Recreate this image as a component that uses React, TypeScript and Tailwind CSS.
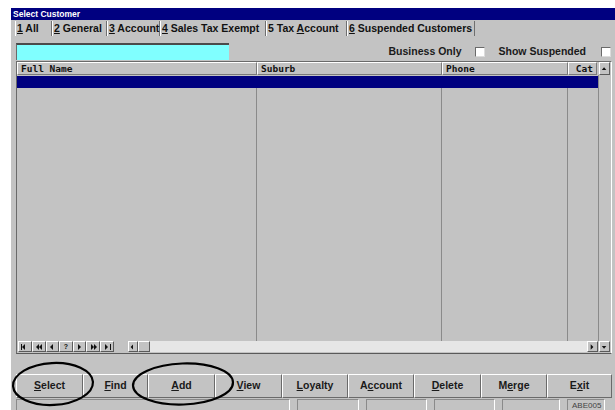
import React from "react";

const ui = { fontFamily: '"Liberation Sans", Arial, sans-serif' };
const mono = { fontFamily: '"DejaVu Sans Mono", "Liberation Mono", monospace' };

function Tab({ w, children }: { w: number; children: React.ReactNode }) {
  return (
    <div
      className="h-full flex items-center pl-[2px] shrink-0 border-r border-r-[#6f6f6f]"
      style={{ width: w, boxShadow: "inset 1px 0 0 #ffffff" }}
    >
      <span className="text-[10.5px] font-bold text-[#111] whitespace-nowrap">{children}</span>
    </div>
  );
}

function HeadCell({ w, children }: { w: number; children?: React.ReactNode }) {
  return (
    <div
      className="h-full shrink-0 flex items-center pl-[3px] border-t border-l border-t-white border-l-white border-r border-b border-r-[#7a7a7a] border-b-[#7a7a7a]"
      style={{ width: w }}
    >
      <span className="text-[9.5px] font-bold text-[#111] leading-none" style={mono}>
        {children}
      </span>
    </div>
  );
}

function Btn3d({ w, children }: { w: number; children?: React.ReactNode }) {
  return (
    <div
      className="h-full shrink-0 flex items-center justify-center bg-[#c3c3c3] border-t border-l border-t-white border-l-white border-r border-b border-r-[#5a5a5a] border-b-[#5a5a5a]"
      style={{ width: w }}
    >
      {children}
    </div>
  );
}

function Tri({ dir, bar, double }: { dir: "l" | "r" | "u" | "d"; bar?: boolean; double?: boolean }) {
  const shapes: React.ReactNode[] = [];
  if (dir === "l") {
    shapes.push(<polygon key="a" points="5,1 5,7 2,4" fill="#111" />);
    if (double) shapes.push(<polygon key="b" points="8,1 8,7 5,4" fill="#111" />);
    if (bar) shapes.push(<rect key="c" x="1" y="1" width="1" height="6" fill="#111" />);
  } else if (dir === "r") {
    shapes.push(<polygon key="a" points="3,1 3,7 6,4" fill="#111" />);
    if (double) shapes.push(<polygon key="b" points="6,1 6,7 9,4" fill="#111" />);
    if (bar) shapes.push(<rect key="c" x="8" y="1" width="1" height="6" fill="#111" />);
  } else if (dir === "u") {
    shapes.push(<polygon key="a" points="2,5 7,5 4.5,2" fill="#111" />);
  } else {
    shapes.push(<polygon key="a" points="2,3 7,3 4.5,6" fill="#111" />);
  }
  return (
    <svg width="10" height="8" viewBox="0 0 10 8">
      {shapes}
    </svg>
  );
}

function ActionButton({ label, u, w }: { label: string; u?: number; w: number }) {
  return (
    <div
      className="h-full shrink-0 flex items-center justify-center border-t border-t-white border-l border-l-white border-r border-r-[#6a6a6a] border-b border-b-[#6a6a6a]"
      style={{ width: w }}
    >
      <span className="text-[10.5px] font-bold text-[#1a1a1a]">
        {label.split("").map((c, i) => (
          <span key={i} className={i === u ? "underline" : ""}>
            {c}
          </span>
        ))}
      </span>
    </div>
  );
}

function Check() {
  return (
    <div className="w-[10px] h-[10px] bg-white border-t border-l border-t-[#6a6a6a] border-l-[#6a6a6a] border-b border-r border-b-[#dcdcdc] border-r-[#dcdcdc]" />
  );
}

function Panel({ w, children }: { w: number; children?: React.ReactNode }) {
  return (
    <div
      className="h-full shrink-0 border-t border-l border-t-[#8a8a8a] border-l-[#8a8a8a] border-r border-r-white flex items-center pl-[4px]"
      style={{ width: w }}
    >
      {children}
    </div>
  );
}

export default function App() {
  return (
    <div className="w-[615px] h-[410px] bg-white overflow-hidden relative" style={ui}>
      <div className="ml-[11px] mt-[8px] w-[606px] h-[402px] bg-[#c3c3c3] flex flex-col">
        {/* title bar */}
        <div className="h-[12px] bg-[#000080] flex items-center pl-[2px] shrink-0">
          <span className="text-[8.5px] font-bold text-white leading-none">Select Customer</span>
        </div>

        {/* tabs */}
        <div className="h-[16px] flex pl-[4px] shrink-0 pt-[1px]">
          <Tab w={37}>
            <span className="underline">1</span> All
          </Tab>
          <Tab w={55}>
            <span className="underline">2</span> General
          </Tab>
          <Tab w={53}>
            <span className="underline">3</span> Account
          </Tab>
          <Tab w={106}>
            <span className="underline">4</span> Sales Tax Exempt
          </Tab>
          <Tab w={81}>
            5 Tax <span className="underline">A</span>ccount
          </Tab>
          <Tab w={128}>
            <span className="underline">6</span> Suspended Customers
          </Tab>
        </div>

        {/* search + filters */}
        <div className="h-[17px] mt-[7px] flex items-center pl-[5px] shrink-0">
          <div className="w-[213px] h-[17px] bg-[#80ffff] border-t-2 border-l border-t-[#4a4a4a] border-l-[#6a6a6a]" />
          <div className="ml-auto flex items-center">
            <span className="text-[10.5px] font-bold text-[#1a1a1a]">Business Only</span>
            <div className="ml-[14px]">
              <Check />
            </div>
            <span className="text-[10.5px] font-bold text-[#1a1a1a] ml-[13px]">Show Suspended</span>
            <div className="ml-[15px] mr-[6px]">
              <Check />
            </div>
          </div>
        </div>

        {/* grid */}
        <div className="ml-[5px] mt-[1px] w-[596px] h-[293px] shrink-0 flex flex-col border-t border-l border-t-[#6a6a6a] border-l-[#6a6a6a] border-b border-b-[#5a5a5a] border-r border-r-white bg-[#c3c3c3]">
          {/* header */}
          <div className="h-[13px] flex shrink-0">
            <HeadCell w={240}>Full Name</HeadCell>
            <HeadCell w={185}>Suburb</HeadCell>
            <HeadCell w={126}>Phone</HeadCell>
            <div className="h-full w-[29px] shrink-0 flex items-center justify-end pr-[3px] border-t border-l border-t-white border-l-white border-r border-b border-r-[#7a7a7a] border-b-[#7a7a7a]">
              <span className="text-[9.5px] font-bold text-[#111] leading-none" style={mono}>
                Cat
              </span>
            </div>
            <div className="w-[2px]" />
            <Btn3d w={11}>
              <Tri dir="u" />
            </Btn3d>
          </div>

          {/* body */}
          <div className="flex-1 flex min-h-0">
            <div className="flex-1 flex flex-col">
              <div className="h-[12px] bg-[#000080] mt-[1px] shrink-0" />
              <div className="flex-1 flex">
                <div className="w-[240px] border-r border-r-[#8a8a8a]" />
                <div className="w-[185px] border-r border-r-[#8a8a8a]" />
                <div className="w-[126px] border-r border-r-[#8a8a8a]" />
                <div className="flex-1" />
              </div>
            </div>
            <div className="w-[13px] border-l border-l-[#8a8a8a]" />
          </div>

          {/* record navigator + horizontal scroll */}
          <div className="h-[12px] flex shrink-0 items-stretch pb-[1px]">
            <div className="flex pl-[1px]">
              <Btn3d w={14}>
                <Tri dir="l" bar />
              </Btn3d>
              <Btn3d w={14}>
                <Tri dir="l" double />
              </Btn3d>
              <Btn3d w={13}>
                <Tri dir="l" />
              </Btn3d>
              <Btn3d w={14}>
                <span className="text-[7px] font-bold leading-none text-[#111]">?</span>
              </Btn3d>
              <Btn3d w={13}>
                <Tri dir="r" />
              </Btn3d>
              <Btn3d w={14}>
                <Tri dir="r" double />
              </Btn3d>
              <Btn3d w={14}>
                <Tri dir="r" bar />
              </Btn3d>
            </div>
            <div className="w-[14px]" />
            <Btn3d w={10}>
              <Tri dir="l" />
            </Btn3d>
            <Btn3d w={12} />
            <div className="flex-1 bg-[#e6e6e6]" />
            <Btn3d w={11}>
              <Tri dir="r" />
            </Btn3d>
            <div className="w-[1px]" />
            <Btn3d w={11}>
              <Tri dir="d" />
            </Btn3d>
            <div className="w-[1px]" />
          </div>
        </div>

        {/* action buttons */}
        <div className="h-[24px] mt-[20px] ml-[5px] flex shrink-0">
          <ActionButton label="Select" u={0} w={67} />
          <ActionButton label="Find" u={0} w={65} />
          <ActionButton label="Add" u={0} w={67} />
          <ActionButton label="View" u={0} w={67} />
          <ActionButton label="Loyalty" u={0} w={66} />
          <ActionButton label="Account" u={1} w={66} />
          <ActionButton label="Delete" u={0} w={67} />
          <ActionButton label="Merge" u={1} w={66} />
          <ActionButton label="Exit" u={1} w={65} />
        </div>

        {/* status bar */}
        <div className="h-[12px] mt-[1px] ml-[5px] flex gap-[7px] shrink-0">
          <Panel w={274} />
          <Panel w={62} />
          <Panel w={61} />
          <Panel w={61} />
          <Panel w={58} />
          <Panel w={38}>
            <span className="text-[8px] text-[#444] leading-none">ABE005</span>
          </Panel>
        </div>
      </div>

      {/* hand-drawn circles around buttons */}
      <svg className="absolute left-0 top-0 pointer-events-none" width="615" height="410">
        <ellipse cx="53" cy="384" rx="40" ry="21" fill="none" stroke="#000" strokeWidth="2.2" transform="rotate(-3 53 384)" />
        <ellipse cx="183" cy="384" rx="50" ry="20.5" fill="none" stroke="#000" strokeWidth="2.2" transform="rotate(-2 183 384)" />
      </svg>
    </div>
  );
}
